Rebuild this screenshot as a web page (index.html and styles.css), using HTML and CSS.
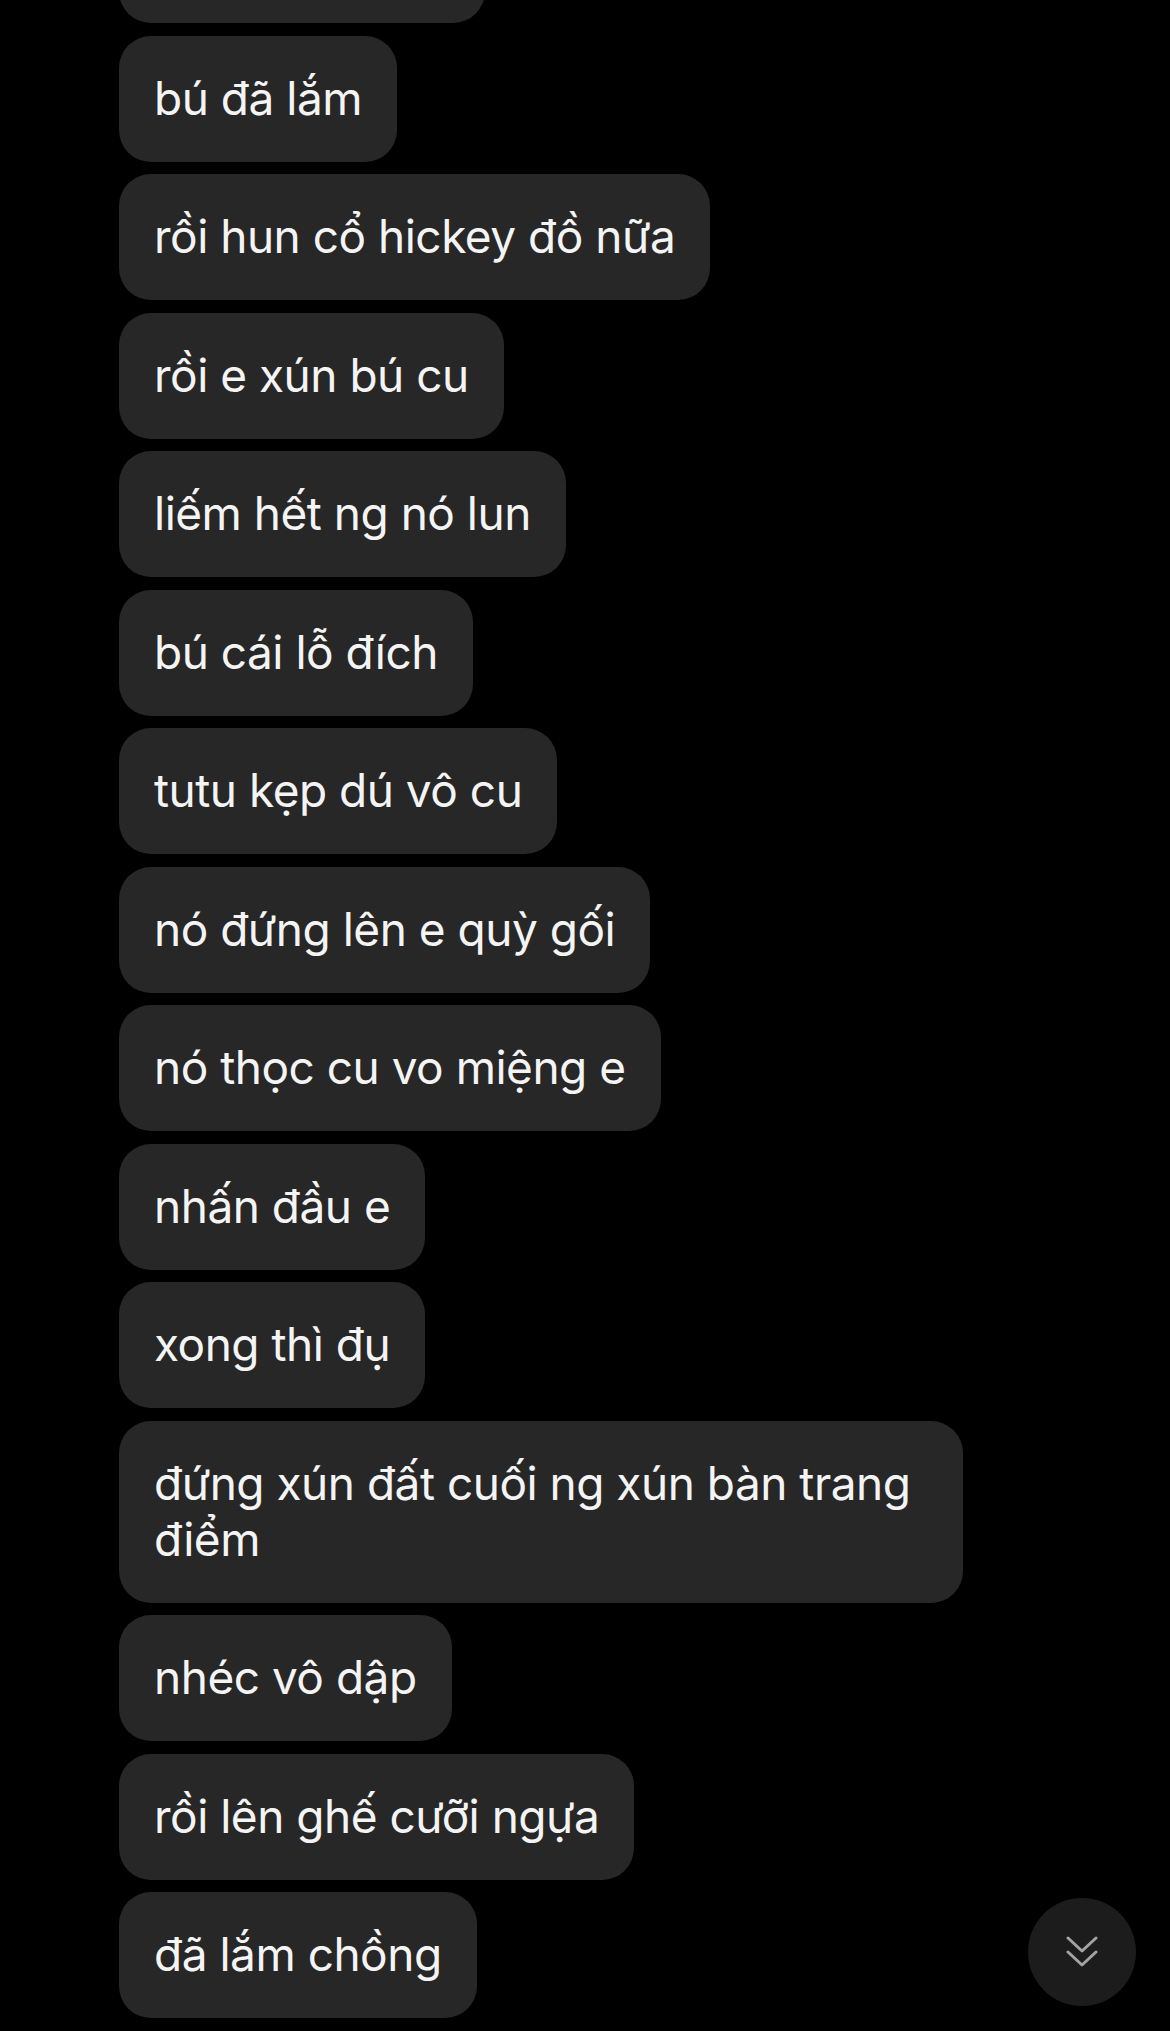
FILE: index.html
```html
<!DOCTYPE html>
<html lang="vi">
<head>
<meta charset="utf-8">
<title>Chat</title>
<link rel="stylesheet" href="styles.css">
</head>
<body>
<main class="thread">
  <div class="bubble cut">&nbsp;</div>
  <div class="bubble">bú đã lắm</div>
  <div class="bubble">rồi hun cổ hickey đồ nữa</div>
  <div class="bubble">rồi e xún bú cu</div>
  <div class="bubble">liếm hết ng nó lun</div>
  <div class="bubble">bú cái lỗ đích</div>
  <div class="bubble">tutu kẹp dú vô cu</div>
  <div class="bubble">nó đứng lên e quỳ gối</div>
  <div class="bubble">nó thọc cu vo miệng e</div>
  <div class="bubble">nhấn đầu e</div>
  <div class="bubble">xong thì đụ</div>
  <div class="bubble">đứng xún đất cuối ng xún bàn trang điểm</div>
  <div class="bubble">nhéc vô dập</div>
  <div class="bubble">rồi lên ghế cưỡi ngựa</div>
  <div class="bubble">đã lắm chồng</div>
</main>
<button class="scroll-down" aria-label="Scroll to bottom">
  <svg width="32" height="34" viewBox="0 0 32 34" fill="none" stroke="#a3a3a3" stroke-width="3" stroke-linecap="round" stroke-linejoin="round">
    <path d="M2 3 L16 16 L30 3"/>
    <path d="M2 17 L16 30 L30 17"/>
  </svg>
</button>
</body>
</html>
```
FILE: styles.css
```css
html, body {
  margin: 0;
  padding: 0;
  background: #000;
}
body {
  width: 1170px;
  height: 2031px;
  overflow: hidden;
  position: relative;
  font-family: "Inter", "Noto Sans", sans-serif;
}
.thread {
  display: flex;
  flex-direction: column;
  align-items: flex-start;
  gap: 12.5px;
  padding-left: 119px;
  margin-top: -103px;
}
.bubble {
  box-sizing: border-box;
  max-width: 844px;
  background: #272727;
  color: #f4f4f4;
  font-size: 46px;
  letter-spacing: -0.5px;
  line-height: 56px;
  padding: 34px 35px 36px;
  border-radius: 32px;
  white-space: normal;
}
.bubble.cut {
  width: 366px;
}
.scroll-down {
  position: absolute;
  left: 1028px;
  top: 1898px;
  width: 108px;
  height: 108px;
  border-radius: 50%;
  border: none;
  background: #1c1c1c;
  display: flex;
  align-items: center;
  justify-content: center;
  padding: 0;
}
```
